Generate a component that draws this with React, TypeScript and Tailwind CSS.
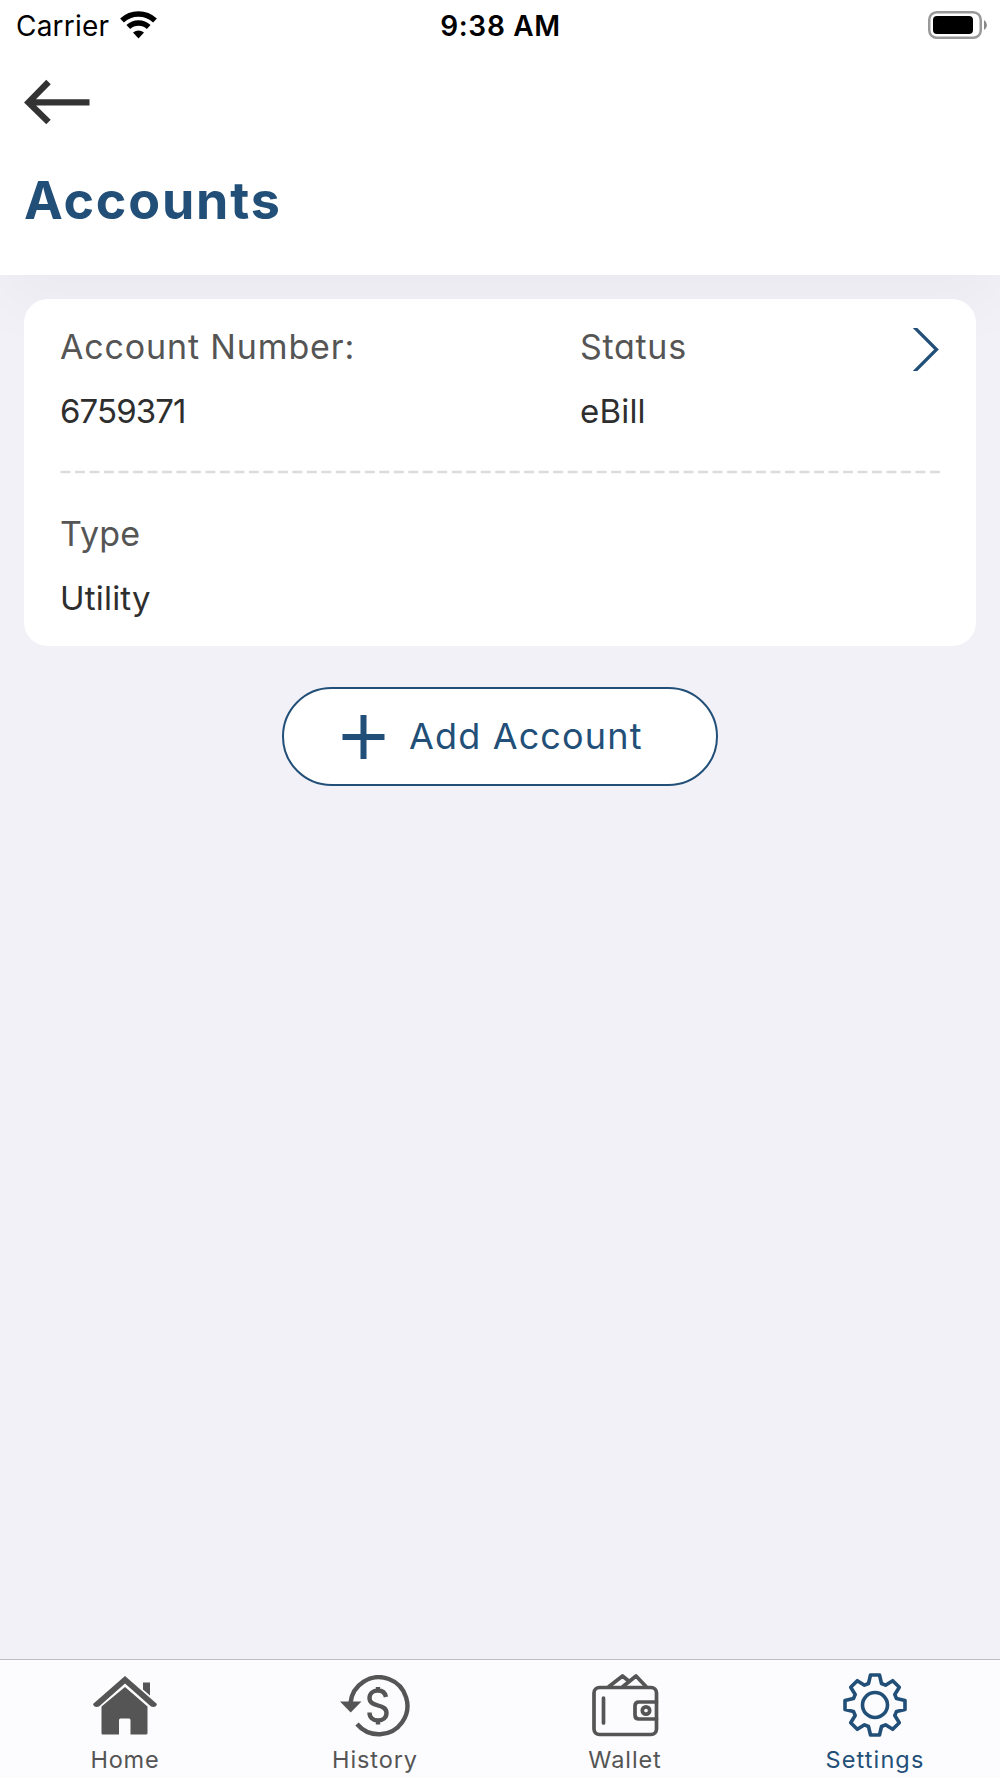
import type { ReactNode } from "react";

const TABS = [
	{ label: "Home", icon: <HomeIcon />, active: false, spacing: "tracking-[0.8px]" },
	{ label: "History", icon: <HistoryIcon />, active: false, spacing: "tracking-[0.9px]" },
	{ label: "Wallet", icon: <WalletIcon />, active: false, spacing: "tracking-[0.9px]" },
	{ label: "Settings", icon: <SettingsIcon />, active: true, spacing: "tracking-[1.1px]" },
];

function HomeIcon() {
	return (
		<svg className="mt-[2px]" width="66" height="60" viewBox="0 0 66 60" fill="currentColor">
			<path d="M33 0 L65 28 Q64 32 59 30.500 L33 7.500 L7 30.500 Q2 32 1 28 Z" />
			<path d="M51 6.500 H58 V19.500 L51 13.500 Z" />
			<path d="M33 11 L55.500 30.500 V57 Q55.500 58.500 54 58.500 H38.500 V44 Q38.500 42.500 37 42.500 H28.500 Q27 42.500 27 44 V58.500 H10.500 Q9.500 58.500 9.500 57 V30.500 Z" />
		</svg>
	);
}

function HistoryIcon() {
	return (
		<svg className="mt-[2px]" width="70" height="62" viewBox="0 0 70 62" fill="none" stroke="currentColor" strokeWidth="4.400">
			<path d="M10.500 28 A28.500 28.500 0 1 1 17 49" />
			<path d="M0 26.500 H21.500 L10.700 37.500 Z" fill="currentColor" stroke="none" />
			<path d="M46 22 C45 17 41.500 15.500 38 15.500 C33 15.500 29.500 18.500 29.500 23 C29.500 33 46.500 28 46.500 38 C46.500 43 42.500 45.500 38 45.500 C33 45.500 29.500 42.500 29.500 37.500 M38 12 V16 M38 45 V49.500" />
		</svg>
	);
}

function WalletIcon() {
	return (
		<svg className="ml-px" width="67" height="63" viewBox="0 0 67 63" fill="none" stroke="currentColor" strokeWidth="3.700" strokeLinecap="round" strokeLinejoin="round">
			<rect x="2" y="13.500" width="62.500" height="47" rx="5.500" />
			<path d="M11.500 24 V49" />
			<path d="M64.500 28 H47 Q43 28 43 32 V41 Q43 45 47 45 H64.500" />
			<circle cx="54" cy="36.500" r="3.700" />
			<path d="M17 12.500 L30.500 2 L36 6.500 M31 12.500 L44 2 L54 12.500" />
		</svg>
	);
}

function SettingsIcon() {
	return (
		<svg width="66" height="66" viewBox="0 0 66 66" fill="none" stroke="currentColor" strokeWidth="3.600" strokeLinejoin="round">
			<path d="M28.500 3 H37.500 L39.500 11.500 L43.500 13.200 L50.700 8.700 L57.300 15.300 L52.800 22.500 L54.500 26.500 L63 28.500 V37.500 L54.500 39.500 L52.800 43.500 L57.300 50.700 L50.700 57.300 L43.500 52.800 L39.500 54.500 L37.500 63 H28.500 L26.500 54.500 L22.500 52.800 L15.300 57.300 L8.700 50.700 L13.200 43.500 L11.500 39.500 L3 37.500 V28.500 L11.500 26.500 L13.200 22.500 L8.700 15.300 L15.300 8.700 L22.500 13.200 L26.500 11.500 Z" />
			<circle cx="33" cy="33" r="12.500" />
		</svg>
	);
}

function StatusBar() {
	return (
		<div className="grid h-[51px] grid-cols-3 items-center pl-[16px] pr-[13px] text-[28px] leading-[51px] text-black">
			<div className="flex items-center gap-[12px]">
				<span className="w-[92px] pt-px tracking-[0.2px]">Carrier</span>
				<svg className="mb-[3px]" width="37" height="28" viewBox="0 0 37 28" fill="none" stroke="currentColor">
					<path d="M2 9.500 A24 24 0 0 1 35 9.500" strokeWidth="5.500" />
					<path d="M8.300 16 A15 15 0 0 1 28.700 16" strokeWidth="5.500" />
					<path d="M18.500 27.500 L13 21.500 Q18.500 17.500 24 21.500 Z" fill="currentColor" stroke="none" />
				</svg>
			</div>
			<span className="mr-[2px] pt-px text-center font-semibold tracking-[0.7px]">9:38 AM</span>
			<svg className="mb-[3px] justify-self-end" width="59" height="28" viewBox="0 0 59 28">
				<rect x="1.250" y="1.250" width="51.500" height="25.500" rx="7.500" fill="none" stroke="#999" strokeWidth="2.500" />
				<rect x="5" y="5" width="40" height="18" rx="4" />
				<path d="M56 9 Q59 11 59 14 Q59 17 56 19 Z" fill="#888" />
			</svg>
		</div>
	);
}

function Field({ label, children, spacing }: { label: ReactNode; children: ReactNode; spacing: string }) {
	return (
		<div className="leading-[64px]">
			<div className={`text-[34px] text-[#555] ${spacing}`}>{label}</div>
			<div className="text-[33px] text-[#2e2e2e]">{children}</div>
		</div>
	);
}

function AccountCard() {
	return (
		<section className="mx-[24px] mt-[24px] h-[347px] rounded-[24px] bg-white px-[36px] pt-[16px]">
			<div className="flex">
				<div className="w-[520px]">
					<Field label="Account Number:" spacing="tracking-[0.85px]">
						<span className="tracking-[-0.9px]">6759371</span>
					</Field>
				</div>
				<div className="flex-1">
					<Field label="Status" spacing="tracking-[0.7px]">
						<span className="tracking-[0.2px]">eBill</span>
					</Field>
				</div>
				<svg className="mr-[1px] mt-[13px]" width="26" height="43" viewBox="0 0 26 43" fill="none" stroke="#224f78" strokeWidth="3.300">
					<path d="M1 -1 L23.500 21.500 L1 44" />
				</svg>
			</div>
			<svg className="mt-[27px] block" width="880" height="4" viewBox="0 0 880 4">
				<path d="M0.500 2 H880" stroke="#dcdcdc" strokeWidth="2.600" strokeDasharray="10 4.490" />
			</svg>
			<div className="mt-[28px]">
				<Field label="Type" spacing="tracking-[0.2px]">
					<span className="tracking-[0.2px]">Utility</span>
				</Field>
			</div>
		</section>
	);
}

export default function App() {
	return (
		<div className="flex h-[1778px] w-[1000px] flex-col overflow-hidden bg-[#f2f1f7] font-['Inter',sans-serif]">
			<header className="h-[275px] bg-white shadow-[0_30px_60px_rgba(0,0,0,0.03)]">
				<StatusBar />
				<svg className="ml-[24px] mt-[28px] block" width="67" height="46" viewBox="0 0 67 46" fill="none" stroke="#333" strokeWidth="6.300">
					<path d="M65.500 23.400 H6 M24.500 3 L4.500 23.400 L24.500 43" />
				</svg>
				<h1 className="mt-[45px] pl-[24px] text-[52px] font-bold leading-[62px] tracking-[1.8px] text-[#224f78]">Accounts</h1>
			</header>

			<main className="flex-1 [font-feature-settings:'cv11']">
				<AccountCard />
				<button className="mx-auto mt-[41px] flex h-[99px] w-[436px] items-center rounded-[50px] border-[2.500px] border-[#224f78] bg-white pl-[58px] text-[36px] text-[#224f78]">
					<svg width="43" height="44" viewBox="0 0 43 44" stroke="currentColor" strokeWidth="6">
						<path d="M0.500 22 H42.500 M21.500 0 V44" />
					</svg>
					<span className="mb-[2px] ml-[24px] tracking-[1.15px]">Add Account</span>
				</button>
			</main>

			<nav className="grid h-[119px] grid-cols-4 border-t border-[#bfbec4] bg-[#fcfcfe]">
				{TABS.map((tab) => (
					<div key={tab.label} className={`flex flex-col items-center ${tab.active ? "text-[#224f78]" : "text-[#555]"}`}>
						<div className="mt-[11px] flex h-[68px] items-center">{tab.icon}</div>
						<span className={`mt-[6px] text-[23.500px] leading-[30px] ${tab.spacing}`}>{tab.label}</span>
					</div>
				))}
			</nav>
		</div>
	);
}
